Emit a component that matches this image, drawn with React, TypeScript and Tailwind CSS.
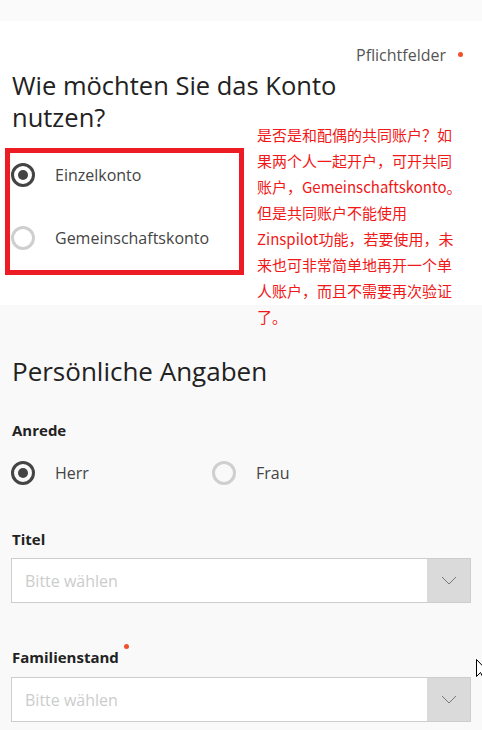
import React from 'react';

const sans = "font-['Open_Sans',sans-serif]";

function Radio({ checked }: { checked: boolean }) {
  return checked ? (
    <span className="flex h-6 w-6 shrink-0 items-center justify-center rounded-full border-[3px] border-[#444]">
      <span className="h-[10px] w-[10px] rounded-full bg-[#444]" />
    </span>
  ) : (
    <span className="h-6 w-6 shrink-0 rounded-full border-[3px] border-[#cfcfcf]" />
  );
}

function Option({ label, checked, className }: { label: string; checked: boolean; className?: string }) {
  return (
    <div className={`flex items-center ${className ?? ''}`}>
      <Radio checked={checked} />
      <span className={`ml-5 text-[16px] leading-6 text-[#444] ${sans}`}>{label}</span>
    </div>
  );
}

function Select() {
  return (
    <div className="mx-[11px] flex h-[45px] border border-[#cdcdcd] bg-white">
      <div className={`flex flex-1 items-center pl-[13px] text-[16px] text-[#cccccc] ${sans}`}>Bitte wählen</div>
      <div className="flex w-[43px] items-center justify-center bg-[#dadada]">
        <svg width="16" height="9" viewBox="0 0 16 9" fill="none">
          <path d="M1 1l7 7 7-7" stroke="#777" strokeWidth="1" />
        </svg>
      </div>
    </div>
  );
}

const notes = [
  '是否是和配偶的共同账户？如',
  '果两个人一起开户，可开共同',
  '账户，Gemeinschaftskonto。',
  '但是共同账户不能使用',
  'Zinspilot功能，若要使用，未',
  '来也可非常简单地再开一个单',
  '人账户，而且不需要再次验证',
  '了。',
];

export default function App() {
  return (
    <div className="relative h-[730px] w-[482px] overflow-hidden bg-[#f9f9f9]">
      {/* top strip */}
      <div className="h-[21px] bg-[#fafafa]" />

      {/* konto section */}
      <div className="bg-white pt-6 pb-[30px]">
        <div className="flex items-start justify-end pr-[19px]">
          <span className={`text-[16px] leading-5 text-[#555] ${sans}`}>Pflichtfelder</span>
          <span className="ml-3 mt-[7px] h-[5px] w-[5px] rounded-full bg-[#f0512b]" />
        </div>
        <h1 className={`mt-1 px-3 text-[25.5px] leading-8 text-[#222] ${sans}`}>
          Wie möchten Sie das Konto
          <br />
          nutzen?
        </h1>
        <div className="ml-[5px] mt-[15px] h-[127px] w-[239px] border-[5px] border-[#ed1c24] pl-px pt-[10px]">
          <Option label="Einzelkonto" checked />
          <Option label="Gemeinschaftskonto" checked={false} className="mt-[39px]" />
        </div>
      </div>

      {/* persönliche angaben */}
      <div className="pt-[50px]">
        <h2 className={`px-3 text-[26px] leading-8 text-[#222] ${sans}`}>Persönliche Angaben</h2>
        <div className={`mt-[33px] px-3 text-[15px] font-bold leading-5 text-[#222] ${sans}`}>Anrede</div>
        <div className="mt-[21px] flex px-[11px]">
          <Option label="Herr" checked className="w-[201px]" />
          <Option label="Frau" checked={false} />
        </div>
        <div className={`mt-[44px] px-3 text-[15px] font-bold leading-5 text-[#222] ${sans}`}>Titel</div>
        <div className="mt-[9px]">
          <Select />
        </div>
        <div className={`mt-[44px] flex items-start px-3 text-[15px] font-bold leading-5 text-[#222] ${sans}`}>
          Familienstand
          <span className="ml-[5px] mt-[-3px] h-[5px] w-[5px] rounded-full bg-[#f0512b]" />
        </div>
        <div className="mt-[10px]">
          <Select />
        </div>
      </div>

      {/* annotation */}
      <div className="absolute left-[257px] top-[122px] font-['Noto_Sans_CJK_SC',sans-serif] text-[15px] leading-[26px] text-[#f01818]">
        {notes.map((n) => (
          <div key={n} className="whitespace-nowrap">{n}</div>
        ))}
      </div>

      {/* mouse cursor at right edge */}
      <svg className="absolute left-[476px] top-[659px]" width="12" height="20" viewBox="0 0 12 20">
        <path d="M0.5 0.5v17l4-4 3 6 2-1-3-6h5.5z" fill="#fff" stroke="#000" strokeWidth="1" />
      </svg>
    </div>
  );
}
